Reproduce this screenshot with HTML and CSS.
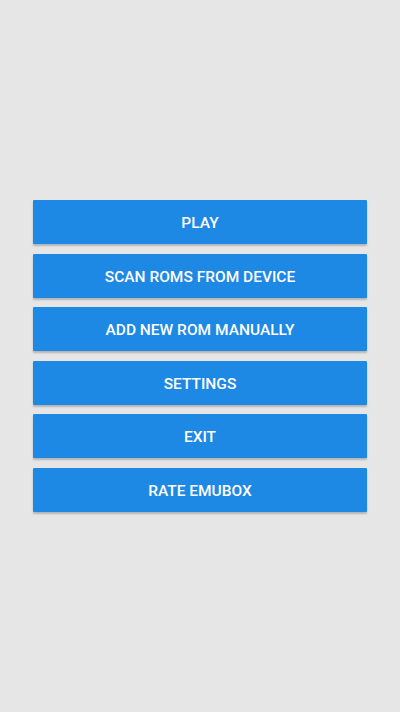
FILE: index.html
```html
<!DOCTYPE html>
<html>
<head>
<meta charset="utf-8">
<link rel="stylesheet" href="styles.css">
</head>
<body>
<div class="menu">
  <div class="btn">PLAY</div>
  <div class="btn">SCAN ROMS FROM DEVICE</div>
  <div class="btn">ADD NEW ROM MANUALLY</div>
  <div class="btn">SETTINGS</div>
  <div class="btn">EXIT</div>
  <div class="btn">RATE EMUBOX</div>
</div>
</body>
</html>
```
FILE: styles.css
```css
html, body {
  margin: 0;
  padding: 0;
  background: #e6e6e6;
  font-family: Roboto, "Noto Sans", sans-serif;
}
.menu {
  box-sizing: border-box;
  height: 712px;
  padding: 0 33px;
  display: flex;
  flex-direction: column;
  justify-content: center;
  gap: 9.6px;
}
.btn {
  box-sizing: border-box;
  height: 44px;
  padding-top: 2px;
  background: #1e88e5;
  color: #ffffff;
  font-size: 15.5px;
  font-weight: 500;
  display: flex;
  align-items: center;
  justify-content: center;
  box-shadow: 0 2px 2px rgba(0, 0, 0, 0.22);
  border-radius: 1px;
}
```
